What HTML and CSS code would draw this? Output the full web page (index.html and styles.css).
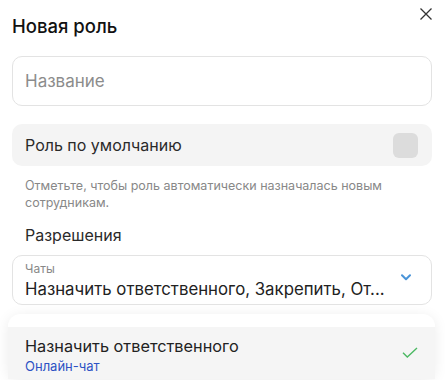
FILE: index.html
```html
<!DOCTYPE html>
<html lang="ru">
<head>
  <meta charset="UTF-8">
  <meta name="viewport" content="width=device-width, initial-scale=1.0">
  <title>Новая роль</title>
  <link rel="stylesheet" href="styles.css">
</head>
<body>

  <div class="header">
    <h2 class="title">Новая роль</h2>
    <button class="close" aria-label="Закрыть">
      <svg width="12" height="12" viewBox="0 0 12 12"><path d="M0.5 0.5L11.5 11.5M11.5 0.5L0.5 11.5" stroke="#333" stroke-width="1.3" fill="none"/></svg>
    </button>
  </div>

  <input class="name-input" type="text" placeholder="Название">

  <label class="toggle-row">
    <span>Роль по умолчанию</span>
    <span class="checkbox"></span>
  </label>
  <p class="hint">Отметьте, чтобы роль автоматически назначалась новым сотрудникам.</p>

  <h3 class="section">Разрешения</h3>

  <div class="select">
    <div class="select-text">
      <div class="select-label">Чаты</div>
      <div class="select-value">Назначить ответственного, Закрепить, От...</div>
    </div>
    <svg class="chevron" width="10" height="7" viewBox="0 0 10 7"><path d="M1 1.2L5 5.2L9 1.2" stroke="#4a94d8" stroke-width="2" fill="none" stroke-linecap="round" stroke-linejoin="round"/></svg>
  </div>

  <div class="menu">
    <div class="menu-item">
      <div>
        <div class="item-name">Назначить ответственного</div>
        <div class="item-group">Онлайн-чат</div>
      </div>
      <svg width="16" height="12" viewBox="0 0 16 12"><path d="M1 5.8L5.3 10L15 1" stroke="#4cb963" stroke-width="1.4" fill="none"/></svg>
    </div>
  </div>

</body>
</html>
```

FILE: styles.css
```css
body {
  font-family: 'Inter', 'Noto Sans', sans-serif;
  margin: 0;
  padding: 0 13px 0 12px;
  background-color: #fff;
  color: #222;
  overflow: hidden;
  height: 380px;
}

.header {
  display: flex;
  justify-content: space-between;
  align-items: flex-start;
  padding-top: 7px;
}

.title {
  margin: 7px 0 0;
  font-size: 18.5px;
  font-weight: 500;
  line-height: 24px;
  color: #111;
}

.close {
  background: none;
  border: none;
  padding: 0;
  margin-top: 1px;
  width: 12px;
  height: 12px;
  cursor: pointer;
}

.close svg {
  display: block;
}

.name-input {
  display: block;
  width: 100%;
  height: 50px;
  margin-top: 18px;
  padding: 0 12px;
  box-sizing: border-box;
  border: 1px solid #e3e3e3;
  border-radius: 10px;
  font-family: inherit;
  font-size: 17px;
  color: #222;
}

.name-input::placeholder {
  color: #8c8c8c;
}

.toggle-row {
  display: flex;
  justify-content: space-between;
  align-items: center;
  height: 42px;
  margin-top: 18px;
  padding: 0 14px 0 13px;
  background-color: #f4f4f4;
  border-radius: 10px;
  font-size: 16px;
  color: #2a2a2a;
}

.checkbox {
  width: 25px;
  height: 25px;
  border-radius: 6px;
  background-color: #dcdcdc;
}

.hint {
  margin: 11px 0 0;
  padding: 0 13px;
  font-size: 12.5px;
  line-height: 17px;
  color: #888;
}

.section {
  margin: 13px 0 0;
  padding-left: 13px;
  font-size: 16px;
  font-weight: 400;
  line-height: 22px;
  color: #2a2a2a;
}

.select {
  display: flex;
  align-items: center;
  justify-content: space-between;
  height: 50px;
  margin-top: 9px;
  padding: 0 20px 0 12px;
  box-sizing: border-box;
  border: 1px solid #e3e3e3;
  border-radius: 10px;
}

.select-label {
  font-size: 12px;
  line-height: 14px;
  color: #888;
}

.select-value {
  margin-top: 3px;
  font-size: 16.8px;
  line-height: 20px;
  color: #222;
}

.chevron {
  margin-top: -6px;
}

.menu {
  margin: 9px -3px 0 -4px;
  padding-top: 13px;
  background: #fff;
  border-radius: 12px;
  box-shadow: 0 2px 14px rgba(0, 0, 0, 0.08);
}

.menu-item {
  display: flex;
  justify-content: space-between;
  align-items: center;
  padding: 8px 17px 4px 17px;
  background-color: #f5f5f5;
}

.menu-item svg {
  margin-top: -4px;
}

.item-name {
  font-size: 16.3px;
  line-height: 22px;
  color: #222;
}

.item-group {
  font-size: 13px;
  line-height: 18px;
  color: #2d52c4;
}
```
